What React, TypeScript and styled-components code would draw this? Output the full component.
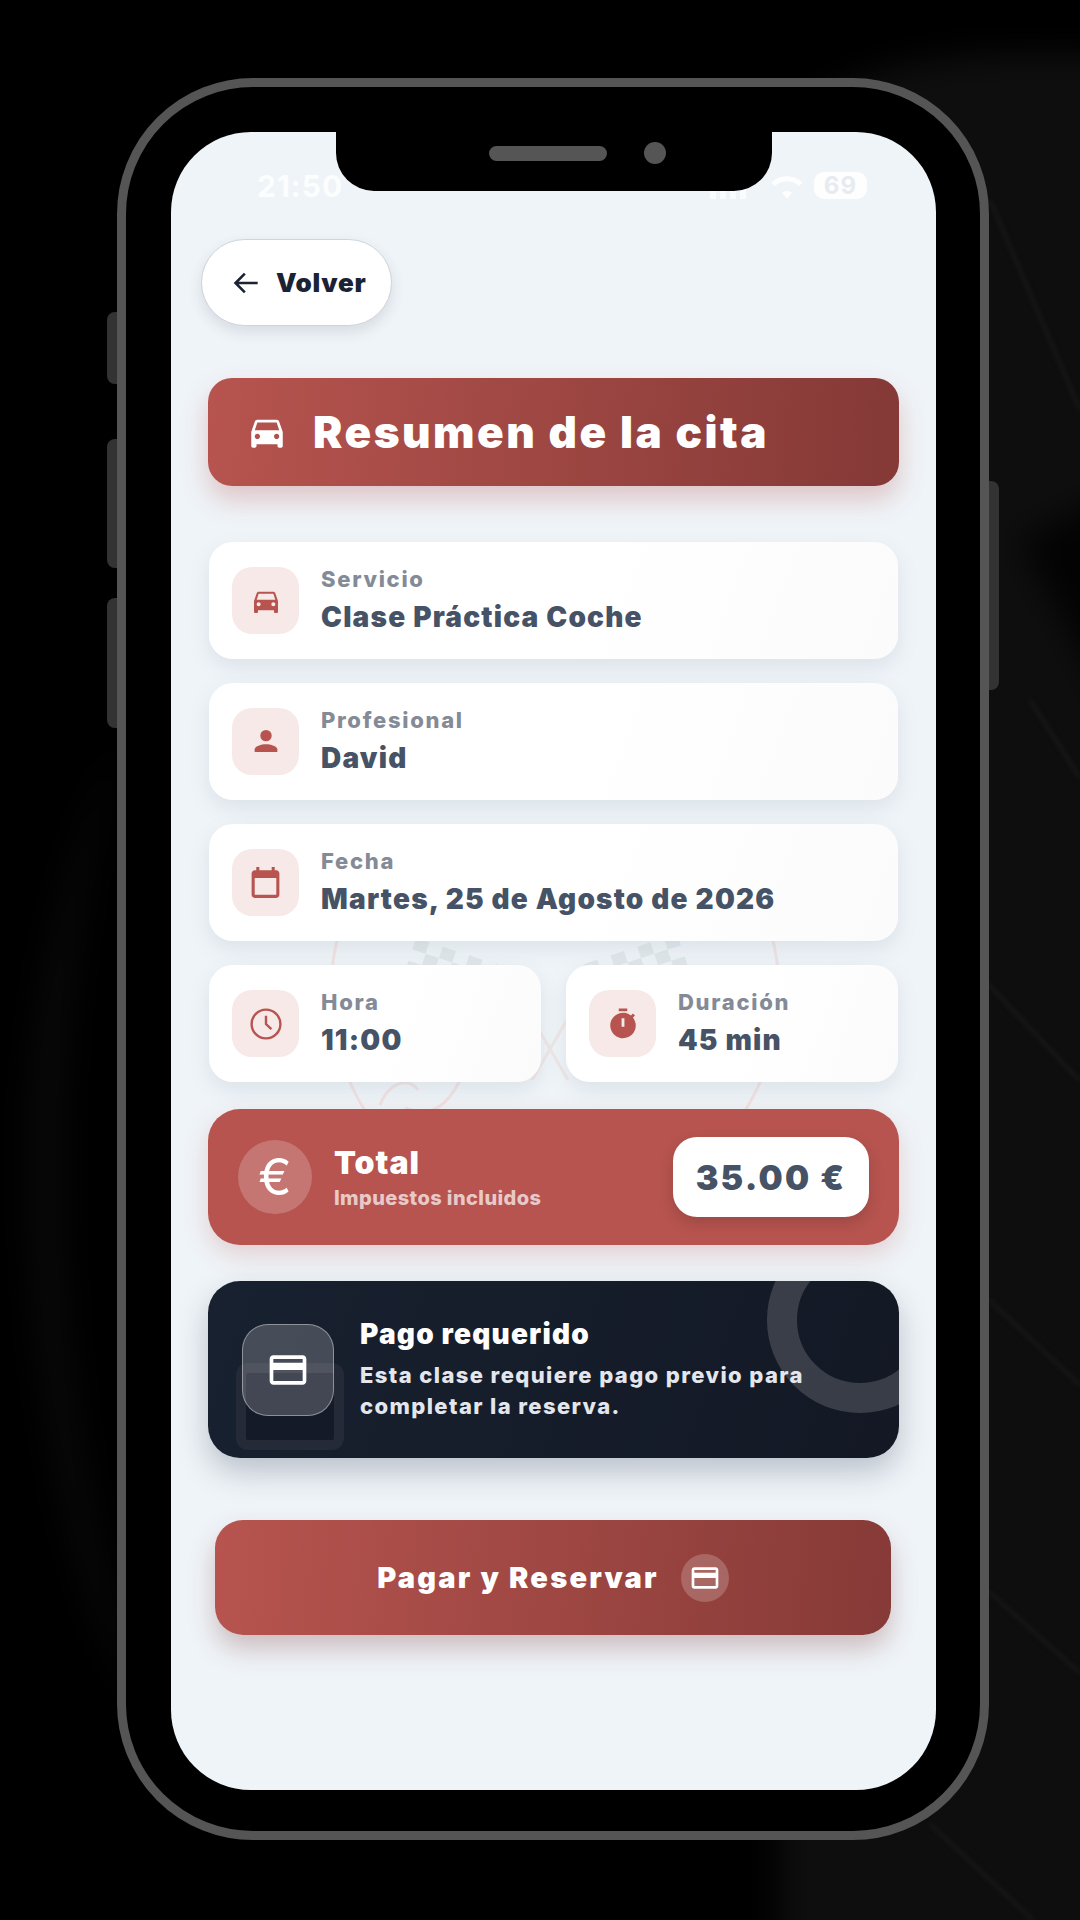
import React from 'react';
import styled, { createGlobalStyle } from 'styled-components';

const GlobalStyle = createGlobalStyle`
  html, body {
    margin: 0;
    padding: 0;
    background: #000;
  }
  * {
    box-sizing: border-box;
  }
`;

const Page = styled.div`
  position: relative;
  width: 1080px;
  height: 1920px;
  overflow: hidden;
  background: #000;
  font-family: Inter, 'Liberation Sans', sans-serif;
  display: flex;
  justify-content: flex-start;
  padding: 78px 0 0 117px;
`;

const Backdrop = styled.svg`
  position: absolute;
  inset: 0;
`;

const Shell = styled.div`
  position: relative;
  width: 872px;
  height: 1762px;
  border: 9px solid #555;
  border-radius: 136px;
  background: #000;
  padding: 45px 44px 41px 45px;
`;

const SideKey = styled.div<{ $top: number; $h: number; $right?: boolean }>`
  position: absolute;
  top: ${p => p.$top}px;
  height: ${p => p.$h}px;
  width: 10px;
  background: #333;
  ${p => (p.$right ? 'right: -19px; border-radius: 0 8px 8px 0;' : 'left: -19px; border-radius: 8px 0 0 8px;')}
`;

const Screen = styled.div`
  position: relative;
  height: 100%;
  border-radius: 80px;
  overflow: hidden;
  background: #eff4f8;
  padding: 0 37px 0 37px;
`;

const Notch = styled.div`
  position: absolute;
  top: 0;
  left: 165px;
  width: 436px;
  height: 59px;
  background: #000;
  border-radius: 0 0 38px 38px;
  z-index: 3;
`;

const Speaker = styled.div`
  position: absolute;
  top: 14px;
  left: 153px;
  width: 118px;
  height: 15px;
  border-radius: 8px;
  background: #555;
`;

const Camera = styled.div`
  position: absolute;
  top: 10px;
  left: 308px;
  width: 22px;
  height: 22px;
  border-radius: 50%;
  background: #555;
`;

const Watermark = styled.svg`
  position: absolute;
  left: 129px;
  top: 798px;
`;

const StatusBar = styled.div`
  position: relative;
  display: flex;
  align-items: center;
  justify-content: space-between;
  height: 107px;
  padding: 0 36px 0 49px;
  margin: 0 -4px 0 0;
  color: rgba(255, 255, 255, 0.85);
  font-weight: 700;
  font-size: 30px;
  letter-spacing: 1px;
`;

const StatusRight = styled.div`
  display: flex;
  align-items: center;
  gap: 10px;
`;

const SignalBars = styled.div`
  display: flex;
  align-items: flex-end;
  gap: 4px;
  height: 26px;
  margin-right: 14px;
`;

const SignalBar = styled.div<{ $h: number }>`
  width: 6px;
  height: ${p => p.$h}px;
  background: rgba(255, 255, 255, 0.7);
`;

const Battery = styled.div`
  background: rgba(255, 255, 255, 0.9);
  color: #e6ebf0;
  border-radius: 10px;
  font-size: 24px;
  padding: 0 10px;
  line-height: 27px;
`;

const BackButton = styled.div`
  position: relative;
  width: 191px;
  height: 87px;
  margin-left: -7px;
  border-radius: 44px;
  background: #fff;
  border: 1px solid #cfd4da;
  box-shadow: 0 6px 14px rgba(40, 50, 70, 0.12);
  display: flex;
  align-items: center;
  gap: 16px;
  padding-left: 30px;
  color: #1a2233;
  font-size: 26px;
  font-weight: 900;
  letter-spacing: 0.7px;
`;

const Title = styled.div`
  position: relative;
  height: 108px;
  margin-top: 52px;
  border-radius: 24px;
  background: linear-gradient(95deg, #b7544f 0%, #863a37 96%);
  box-shadow: 0 14px 26px rgba(180, 80, 76, 0.28);
  display: flex;
  align-items: center;
  gap: 25px;
  padding-left: 38px;
  color: #fff;
  font-size: 44px;
  font-weight: 900;
  letter-spacing: 2.5px;
`;

const CardList = styled.div`
  position: relative;
  margin-top: 56px;
  display: flex;
  flex-direction: column;
  gap: 24px;
`;

const Row = styled.div`
  display: grid;
  grid-template-columns: 1fr 1fr;
  gap: 23px;
`;

const Card = styled.div`
  height: 117px;
  margin: 0 1px;
  border-radius: 24px;
  background: linear-gradient(110deg, #fff 0%, #fff 55%, #fbfbfb 100%);
  box-shadow: 0 8px 20px rgba(100, 130, 140, 0.14);
  display: flex;
  align-items: center;
  gap: 22px;
  padding-left: 23px;
`;

const IconBox = styled.div`
  width: 67px;
  height: 67px;
  border-radius: 20px;
  background: #f7e9e8;
  color: #b7544f;
  display: flex;
  align-items: center;
  justify-content: center;
`;

const CardText = styled.div`
  display: flex;
  flex-direction: column;
  padding-top: 3px;
`;

const Label = styled.div`
  color: #848b97;
  font-size: 22px;
  font-weight: 800;
  letter-spacing: 1.7px;
  line-height: 30px;
`;

const Value = styled.div`
  color: #465266;
  font-size: 28px;
  font-weight: 900;
  letter-spacing: 1.2px;
  line-height: 46px;
`;

const TotalCard = styled.div`
  position: relative;
  height: 136px;
  margin-top: 27px;
  border-radius: 32px;
  background: #b7544f;
  box-shadow: 0 10px 24px rgba(180, 80, 76, 0.22);
  display: flex;
  align-items: center;
  padding: 0 30px;
`;

const EuroCircle = styled.div`
  width: 74px;
  height: 74px;
  border-radius: 50%;
  background: rgba(255, 255, 255, 0.2);
  color: #fff;
  display: flex;
  align-items: center;
  justify-content: center;
  font-size: 50px;
  font-weight: 400;
`;

const TotalText = styled.div`
  margin-left: 22px;
  padding-top: 2px;
  flex: 1;
`;

const TotalTitle = styled.div`
  color: #fff;
  font-size: 32px;
  font-weight: 900;
  letter-spacing: 1px;
  line-height: 38px;
`;

const TotalSub = styled.div`
  color: rgba(255, 255, 255, 0.7);
  font-size: 20px;
  font-weight: 800;
  letter-spacing: 0.4px;
  line-height: 28px;
  margin-top: 2px;
`;

const PriceTag = styled.div`
  width: 196px;
  height: 80px;
  border-radius: 24px;
  background: #fff;
  box-shadow: 0 6px 14px rgba(70, 30, 30, 0.22);
  color: #465266;
  font-size: 34px;
  font-weight: 900;
  letter-spacing: 2.2px;
  display: flex;
  align-items: center;
  justify-content: center;
`;

const PayNotice = styled.div`
  position: relative;
  height: 177px;
  margin-top: 36px;
  border-radius: 32px;
  background: linear-gradient(110deg, #182130 0%, #131824 100%);
  box-shadow: 0 14px 30px rgba(30, 45, 70, 0.25);
  overflow: hidden;
  display: flex;
  align-items: center;
  padding-left: 34px;
`;

const Ring = styled.div`
  position: absolute;
  right: -54px;
  top: -54px;
  width: 186px;
  height: 186px;
  border: 30px solid rgba(255, 255, 255, 0.16);
  border-radius: 50%;
`;

const GhostCard = styled.div`
  position: absolute;
  left: 28px;
  top: 82px;
  width: 108px;
  height: 87px;
  border-radius: 12px;
  background: #141a28;
  border: 10px solid rgba(255, 255, 255, 0.07);
`;

const GlassIcon = styled.div`
  position: relative;
  width: 92px;
  height: 92px;
  border-radius: 26px;
  background: rgba(255, 255, 255, 0.2);
  border: 1px solid rgba(255, 255, 255, 0.4);
  color: #fff;
  display: flex;
  align-items: center;
  justify-content: center;
`;

const NoticeText = styled.div`
  position: relative;
  margin-left: 26px;
  margin-top: -2px;
`;

const NoticeTitle = styled.div`
  color: #fff;
  font-size: 28px;
  font-weight: 900;
  letter-spacing: 1.2px;
  line-height: 38px;
`;

const NoticeBody = styled.div`
  color: #e3e6ec;
  font-size: 22px;
  font-weight: 800;
  letter-spacing: 1.4px;
  line-height: 31px;
  margin-top: 7px;
`;

const PayButton = styled.div`
  height: 115px;
  margin: 62px 8px 0 7px;
  border-radius: 28px;
  background: linear-gradient(95deg, #b7544f 0%, #863a37 100%);
  box-shadow: 0 14px 26px rgba(120, 50, 50, 0.28);
  color: #fff;
  display: flex;
  align-items: center;
  justify-content: center;
  gap: 22px;
  font-size: 29px;
  font-weight: 900;
  letter-spacing: 2.2px;
`;

const ButtonIcon = styled.div`
  width: 48px;
  height: 48px;
  border-radius: 50%;
  background: rgba(255, 255, 255, 0.2);
  display: flex;
  align-items: center;
  justify-content: center;
`;

const CarIcon = ({ size }: { size: number }) => (
  <svg width={size} height={size} viewBox="0 0 24 24" fill="currentColor">
    <path d="M18.92 6.01C18.72 5.42 18.16 5 17.5 5h-11c-.66 0-1.21.42-1.42 1.01L3 12v8c0 .55.45 1 1 1h1c.55 0 1-.45 1-1v-1h12v1c0 .55.45 1 1 1h1c.55 0 1-.45 1-1v-8l-2.08-5.99zM6.5 16c-.83 0-1.5-.67-1.5-1.5S5.67 13 6.5 13s1.5.67 1.5 1.5S7.33 16 6.5 16zm11 0c-.83 0-1.5-.67-1.5-1.5s.67-1.5 1.5-1.5 1.5.67 1.5 1.5-.67 1.5-1.5 1.5zM5 11l1.5-4.5h11L19 11H5z" />
  </svg>
);

const PersonIcon = () => (
  <svg width="34" height="34" viewBox="0 0 24 24" fill="currentColor">
    <circle cx="12" cy="7.5" r="4" />
    <path d="M12 13.5c-3.2 0-8 1.4-8 3.6V19h16v-1.9c0-2.2-4.8-3.6-8-3.6z" />
  </svg>
);

const CalendarIcon = () => (
  <svg width="37" height="37" viewBox="0 0 24 24" fill="currentColor">
    <path d="M19 4h-1V2h-2v2H8V2H6v2H5c-1.1 0-2 .9-2 2v14c0 1.1.9 2 2 2h14c1.1 0 2-.9 2-2V6c0-1.1-.9-2-2-2zm0 16H5V9h14v11z" />
  </svg>
);

const ClockIcon = () => (
  <svg width="36" height="36" viewBox="0 0 24 24" fill="none" stroke="currentColor" strokeWidth="1.6">
    <circle cx="12" cy="12" r="9.6" />
    <path d="M12 6.5V12l3.6 3.4" />
  </svg>
);

const TimerIcon = () => (
  <svg width="34" height="34" viewBox="0 0 24 24" fill="currentColor">
    <path d="M15 1H9v2h6V1zm4.03 6.39 1.42-1.42-1.41-1.41-1.42 1.42A9 9 0 1 0 19.03 7.39zM13 14h-2V8h2v6z" />
  </svg>
);

const PayCardIcon = ({ size }: { size: number }) => (
  <svg width={size} height={size} viewBox="0 0 24 24" fill="currentColor">
    <path d="M20 4H4c-1.11 0-2 .89-2 2v12c0 1.11.89 2 2 2h16c1.11 0 2-.89 2-2V6c0-1.11-.89-2-2-2zm0 14H4v-6h16v6zm0-10H4V6h16v2z" />
  </svg>
);

const BackArrow = () => (
  <svg width="28" height="28" viewBox="0 0 24 24" fill="none" stroke="currentColor" strokeWidth="2.2">
    <path d="M22 12H3M11 4l-8 8 8 8" />
  </svg>
);

const flagSquares = [
  [0, 0], [2, 0], [4, 0], [6, 0], [1, 1], [3, 1], [5, 1], [0, 2], [2, 2], [4, 2], [6, 2],
];

const CheckerFlag = ({ x, y, angle }: { x: number; y: number; angle: number }) => (
  <g transform={`translate(${x} ${y}) rotate(${angle})`} fill="#e1e7ea">
    {flagSquares.map(([col, row]) => (
      <rect key={`${col}-${row}`} x={col * 14} y={row * 12} width="14" height="12" />
    ))}
  </g>
);

const App: React.FC = () => {
  return (
    <Page>
      <GlobalStyle />
      <Backdrop width="1080" height="1920" viewBox="0 0 1080 1920" fill="none">
        <defs>
          <filter id="soft" filterUnits="userSpaceOnUse" x="-300" y="-300" width="1700" height="2600" colorInterpolationFilters="sRGB">
            <feGaussianBlur stdDeviation="2" />
          </filter>
          <filter id="softer" filterUnits="userSpaceOnUse" x="-300" y="-300" width="1700" height="2600" colorInterpolationFilters="sRGB">
            <feGaussianBlur stdDeviation="16" />
          </filter>
        </defs>
        <g filter="url(#softer)">
          <path d="M780 130C850 60 960 40 1200 60V2050H780Z" fill="#0e0e0e" />
          <path d="M1020 540L1140 760V480Z" fill="#030303" />
          <path d="M120 740C40 1000 40 1400 140 1700C60 1600 20 1300 30 1100C40 960 70 840 120 740Z" fill="#090909" />
        </g>
        <g filter="url(#soft)" stroke="#1a1a1a" strokeWidth="3">
          <path d="M990 200L1080 410" />
          <path d="M1030 700L1080 778" />
          <path d="M988 984L1080 1081" />
          <path d="M988 1299L1080 1385" />
          <path d="M988 1591L1080 1673" />
          <path d="M930 1824L1033 1920" />
        </g>
      </Backdrop>
      <Shell>
        <SideKey $top={225} $h={72} />
        <SideKey $top={352} $h={129} />
        <SideKey $top={511} $h={130} />
        <SideKey $right $top={394} $h={209} />
        <Screen>
          <Notch>
            <Speaker />
            <Camera />
          </Notch>
          <Watermark width="500" height="190" viewBox="0 0 500 190" fill="none">
            <circle cx="255" cy="62" r="224" stroke="#f1e2e2" strokeWidth="3" />
            <CheckerFlag x={116} y={8} angle={18} />
            <CheckerFlag x={284} y={34} angle={-18} />
            <path d="M232 88L268 150M268 88L232 150" stroke="#f0e6e6" strokeWidth="3" />
            <path d="M80 175C90 150 110 148 118 160M105 178C135 190 150 170 160 150" stroke="#f1e2e2" strokeWidth="3" />
          </Watermark>
          <StatusBar>
            <span>21:50</span>
            <StatusRight>
              <SignalBars>
                <SignalBar $h={10} />
                <SignalBar $h={14} />
                <SignalBar $h={18} />
                <SignalBar $h={22} />
              </SignalBars>
              <svg width="34" height="26" viewBox="0 0 24 18" fill="rgba(255,255,255,0.9)">
                <path d="M12 18l3.5-4a5 5 0 0 0-7 0L12 18zM1 6.5l2.4 2.6a12.5 12.5 0 0 1 17.2 0L23 6.5a16 16 0 0 0-22 0z" />
              </svg>
              <Battery>69</Battery>
            </StatusRight>
          </StatusBar>
          <BackButton>
            <BackArrow />
            Volver
          </BackButton>
          <Title>
            <CarIcon size={42} />
            Resumen de la cita
          </Title>
          <CardList>
            <Card>
              <IconBox><CarIcon size={32} /></IconBox>
              <CardText>
                <Label>Servicio</Label>
                <Value>Clase Práctica Coche</Value>
              </CardText>
            </Card>
            <Card>
              <IconBox><PersonIcon /></IconBox>
              <CardText>
                <Label>Profesional</Label>
                <Value>David</Value>
              </CardText>
            </Card>
            <Card>
              <IconBox><CalendarIcon /></IconBox>
              <CardText>
                <Label>Fecha</Label>
                <Value>Martes, 25 de Agosto de 2026</Value>
              </CardText>
            </Card>
            <Row>
              <Card>
                <IconBox><ClockIcon /></IconBox>
                <CardText>
                  <Label>Hora</Label>
                  <Value>11:00</Value>
                </CardText>
              </Card>
              <Card>
                <IconBox><TimerIcon /></IconBox>
                <CardText>
                  <Label>Duración</Label>
                  <Value>45 min</Value>
                </CardText>
              </Card>
            </Row>
          </CardList>
          <TotalCard>
            <EuroCircle>€</EuroCircle>
            <TotalText>
              <TotalTitle>Total</TotalTitle>
              <TotalSub>Impuestos incluidos</TotalSub>
            </TotalText>
            <PriceTag>35.00 €</PriceTag>
          </TotalCard>
          <PayNotice>
            <Ring />
            <GhostCard />
            <GlassIcon><PayCardIcon size={44} /></GlassIcon>
            <NoticeText>
              <NoticeTitle>Pago requerido</NoticeTitle>
              <NoticeBody>
                Esta clase requiere pago previo para
                <br />
                completar la reserva.
              </NoticeBody>
            </NoticeText>
          </PayNotice>
          <PayButton>
            Pagar y Reservar
            <ButtonIcon><PayCardIcon size={32} /></ButtonIcon>
          </PayButton>
        </Screen>
      </Shell>
    </Page>
  );
};

export default App;
